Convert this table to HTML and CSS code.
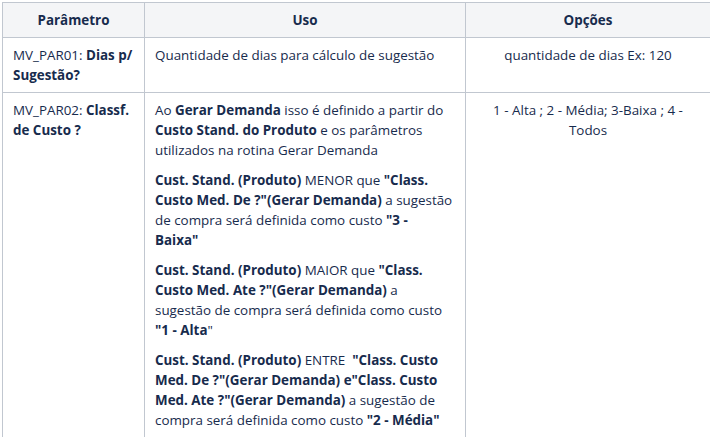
FILE: index.html
```html
<!DOCTYPE html>
<html lang="pt-BR">
<head>
    <meta charset="UTF-8">
    <title>Parâmetros</title>
    <link rel="stylesheet" href="styles.css">
</head>
<body>
    <table class="param-table">
        <colgroup>
            <col class="col-param">
            <col class="col-uso">
            <col class="col-opcoes">
        </colgroup>
        <thead>
            <tr>
                <th>Parâmetro</th>
                <th>Uso</th>
                <th>Opções</th>
            </tr>
        </thead>
        <tbody>
            <tr>
                <td>MV_PAR01: <strong>Dias p/ Sugestão?</strong></td>
                <td class="uso"><p>Quantidade de dias para cálculo de sugestão</p></td>
                <td class="center"><p>quantidade de dias Ex: 120</p></td>
            </tr>
            <tr>
                <td>MV_PAR02: <strong>Classf. de Custo ?</strong></td>
                <td class="uso">
                    <p>Ao <strong>Gerar Demanda</strong> isso é definido a partir do <strong>Custo Stand. do Produto</strong> e os parâmetros utilizados na rotina Gerar Demanda</p>
                    <p><strong>Cust. Stand. (Produto)</strong> MENOR que <strong>"Class. Custo Med. De ?"(Gerar Demanda)</strong> a sugestão de compra será definida como custo <strong>"3 - Baixa"</strong></p>
                    <p><strong>Cust. Stand. (Produto)</strong> MAIOR que <strong>"Class. Custo Med. Ate ?"(Gerar Demanda)</strong> a sugestão de compra será definida como custo <strong>"1 - Alta</strong>"</p>
                    <p><strong>Cust. Stand. (Produto)</strong> ENTRE&nbsp; <strong>"Class. Custo Med. De ?"(Gerar Demanda) e"Class. Custo Med. Ate ?"(Gerar Demanda)</strong> a sugestão de compra será definida como custo <strong>"2 - Média"</strong></p>
                </td>
                <td class="center"><p>1 - Alta ; 2 - Média; 3-Baixa ; 4 - Todos</p></td>
            </tr>
        </tbody>
    </table>
</body>
</html>
```

FILE: styles.css
```css
body {
    margin: 2px;
    font-family: "Open Sans", "Noto Sans", Arial, sans-serif;
    font-size: 13.4px;
    line-height: 20px;
    color: #172b4d;
    background-color: #fff;
}
.param-table {
    border-collapse: collapse;
    table-layout: fixed;
    width: 708px;
}
.col-param {
    width: 142px;
}
.col-uso {
    width: 321px;
}
.col-opcoes {
    width: 245px;
}
.param-table th,
.param-table td {
    border: 1px solid #c1c7d0;
    padding: 7px 10px;
    vertical-align: top;
    text-align: left;
}
.param-table th {
    background-color: #f4f5f7;
    text-align: center;
    font-weight: bold;
}
.param-table td.uso {
    padding-right: 12px;
}
.param-table td.center {
    text-align: center;
}
.param-table p {
    margin: 10px 0 0;
}
.param-table p:first-child {
    margin-top: 0;
}
strong {
    font-weight: bold;
}
```
